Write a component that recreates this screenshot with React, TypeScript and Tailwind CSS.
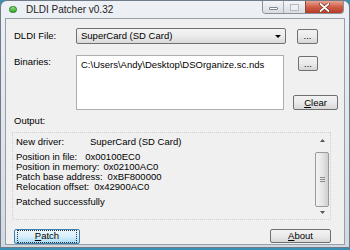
import { ReactNode } from 'react';

const FONT = { fontFamily: '"Liberation Sans", Arial, sans-serif' };

/** Vista-style push button. `def` gives the blue default/focused look. */
function PushButton({ children, className, def }: { children: ReactNode; className?: string; def?: boolean }) {
    return (
        <div
            className={
                'flex items-center justify-center rounded-[2px] border text-[9.5px] leading-none text-black ' +
                (def
                    ? 'border-[#3c7fb1] bg-gradient-to-b from-[#eaf6fd] via-[#d9f0fc] to-[#a7d9f5] '
                    : 'border-[#707070] bg-gradient-to-b from-[#f2f2f2] via-[#ebebeb] to-[#d6d6d6] ') +
                (className ?? '')
            }
        >
            {def ? (
                <div className="flex h-full w-full items-center justify-center border border-dotted border-[#333] m-[2px]">
                    {children}
                </div>
            ) : (
                children
            )}
        </div>
    );
}

function TitleButtons() {
    return (
        <div className="flex h-[13px] self-start overflow-hidden rounded-b-[4px] border border-t-0 border-[#8a939d]">
            <div className="flex w-[20px] items-center justify-center bg-gradient-to-b from-[#f4f5f7] to-[#d8dde3]">
                <div className="mt-[3px] h-[3px] w-[9px] rounded-[1px] border border-[#7d8792] bg-white" />
            </div>
            <div className="flex w-[22px] items-center justify-center border-l border-[#a4acb5] bg-gradient-to-b from-[#f4f5f7] to-[#d8dde3]">
                <div className="h-[7px] w-[9px] border border-[#b3bac2] bg-[#eef0f2]" />
            </div>
            <div className="flex w-[38px] items-center justify-center border-l border-[#8a4b3d] bg-gradient-to-b from-[#e6a293] via-[#cf5d48] to-[#b63a25]">
                <svg width="11" height="9" viewBox="0 0 11 9">
                    <path d="M1.5 1 L9.5 8 M9.5 1 L1.5 8" stroke="#6b2418" strokeWidth="3" strokeLinecap="round" />
                    <path d="M1.5 1 L9.5 8 M9.5 1 L1.5 8" stroke="#fff" strokeWidth="1.8" strokeLinecap="round" />
                </svg>
            </div>
        </div>
    );
}

function ScrollBar() {
    return (
        <div className="flex w-[15px] flex-col bg-[#f0f0f0] pr-[1px]">
            <div className="flex h-[16px] items-center justify-center">
                <svg width="5" height="3" viewBox="0 0 5 3">
                    <path d="M0 3 L2.5 0 L5 3 Z" fill="#555" />
                </svg>
            </div>
            <div className="mt-[4px] flex h-[55px] flex-col items-center justify-center gap-[1px] rounded-[2px] border border-[#9a9a9a] bg-gradient-to-r from-[#f3f3f3] via-[#e6e6e6] to-[#cfcfcf]">
                <div className="h-px w-[5px] bg-[#8a8a8a]" />
                <div className="h-px w-[5px] bg-[#8a8a8a]" />
                <div className="h-px w-[5px] bg-[#8a8a8a]" />
            </div>
            <div className="flex-1" />
            <div className="flex h-[12px] items-center justify-center">
                <svg width="5" height="3" viewBox="0 0 5 3">
                    <path d="M0 0 L5 0 L2.5 3 Z" fill="#555" />
                </svg>
            </div>
        </div>
    );
}

export default function App() {
    return (
        <div className="flex h-[250px] w-[350px] flex-col overflow-hidden bg-[#3a90b4]" style={FONT}>
            <div className="flex h-[248px] flex-col rounded-t-[7px] border border-[#6f7b88] bg-gradient-to-b from-[#edf0f4] via-[#e2e6eb] to-[#d3d9e0]">
                {/* Title bar */}
                <div className="flex h-[17px] shrink-0 items-center pl-[8px] pr-[5px]">
                    <div className="h-[7px] w-[8px] rounded-full border border-[#1f7a1a] bg-gradient-to-b from-[#8fe27f] to-[#25a820]" />
                    <span className="ml-[9px] text-[10px] leading-none text-[#1d1d1d]">DLDI Patcher v0.32</span>
                    <div className="flex-1" />
                    <TitleButtons />
                </div>

                {/* Client area */}
                <div className="mx-[4px] mb-[4px] flex flex-1 flex-col border border-[#97a0aa] bg-[#f0f0f0] pl-[6px] pt-[9px] text-[9.5px] leading-none text-black">
                    {/* DLDI file row */}
                    <div className="flex h-[16px] items-center">
                        <span className="w-[64px] pl-[2px]">DLDI File:</span>
                        <div className="flex h-[16px] w-[210px] items-center rounded-[2px] border border-[#707070] bg-gradient-to-b from-[#f4f4f4] via-[#ececec] to-[#dadada] pl-[4px] pr-[4px]">
                            <span className="flex-1">SuperCard (SD Card)</span>
                            <svg width="6" height="3" viewBox="0 0 6 3">
                                <path d="M0 0 L6 0 L3 3 Z" fill="#000" />
                            </svg>
                        </div>
                        <PushButton className="ml-[11px] h-[15px] w-[21px]">...</PushButton>
                    </div>

                    {/* Binaries row */}
                    <div className="mt-[11px] flex h-[55px]">
                        <span className="w-[64px] pl-[2px] pt-[2px]">Binaries:</span>
                        <div className="h-[55px] w-[208px] border border-[#abadb3] bg-white pl-[4px] pt-[4px]">
                            C:\Users\Andy\Desktop\DSOrganize.sc.nds
                        </div>
                        <div className="ml-[9px] flex w-[45px] flex-col">
                            <PushButton className="ml-[5px] mt-[1px] h-[15px] w-[20px]">...</PushButton>
                            <div className="flex-1" />
                            <PushButton className="h-[15px] w-[45px]">
                                <span className="underline underline-offset-1">C</span>lear
                            </PushButton>
                        </div>
                    </div>

                    <span className="mt-[6px] pl-[2px]">Output:</span>

                    {/* Output box */}
                    <div className="mt-[6px] flex h-[88px] w-[319px] border border-dotted border-[#cfcfcf] bg-[#f0f0f0]">
                        <div className="flex flex-1 flex-col pl-[3px] pt-[4px] text-[9.5px] leading-[10px]">
                            <div className="flex">
                                <span className="w-[74px]">New driver:</span>
                                <span>SuperCard (SD Card)</span>
                            </div>
                            <div className="mt-[5px]">
                                Position in file:<span className="ml-[8px]">0x00100EC0</span>
                            </div>
                            <div>
                                Position in memory:<span className="ml-[4px]">0x02100AC0</span>
                            </div>
                            <div>
                                Patch base address:<span className="ml-[5px]">0xBF800000</span>
                            </div>
                            <div>
                                Relocation offset:<span className="ml-[5px]">0x42900AC0</span>
                            </div>
                            <div className="mt-[5px]">Patched successfully</div>
                        </div>
                        <ScrollBar />
                    </div>

                    {/* Bottom buttons */}
                    <div className="mt-[9px] flex w-[319px] items-start justify-between">
                        <PushButton def className="ml-[2px] h-[15px] w-[66px]">
                            <span className="underline underline-offset-1">P</span>atch
                        </PushButton>
                        <PushButton className="h-[14px] w-[61px]">
                            <span className="underline underline-offset-1">A</span>bout
                        </PushButton>
                    </div>
                </div>
            </div>
        </div>
    );
}
